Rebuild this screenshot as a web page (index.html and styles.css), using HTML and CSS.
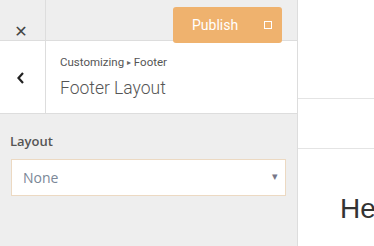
FILE: index.html
```html
<!DOCTYPE HTML>
<html>
<head>
<meta charset="utf-8">
<title>Customizer</title>
<link rel="stylesheet" href="styles.css">
</head>
<body>
	<div class="wrap">
		<div class="sidebar">
			<div class="topbar">
				<div class="close">&#10005;</div>
				<div class="publish">Publish <span class="gear"></span></div>
			</div>
			<div class="head">
				<div class="back">
					<svg width="10" height="14" viewBox="0 0 10 14"><path d="M7 2 L2.5 7 L7 12" fill="none" stroke="#222" stroke-width="2.2"/></svg>
				</div>
				<div class="titles">
					<div class="crumb">Customizing <span class="sep">&#9656;</span> Footer</div>
					<div class="title">Footer Layout</div>
				</div>
			</div>
			<div class="panel">
				<div class="label">Layout</div>
				<div class="select">
					<span>None</span>
					<span class="arrow">&#9662;</span>
				</div>
			</div>
		</div>
		<div class="preview">
			<div class="row1"></div>
			<div class="row2"></div>
			<div class="content">
				<h1>Hello world!</h1>
			</div>
		</div>
	</div>
</body>
</html>
```

FILE: styles.css
```css
*{
	margin: 0;
	padding: 0;
	box-sizing: border-box;
}
body{
	width: 374px;
	height: 246px;
	overflow: hidden;
	background: #fff;
	font-family: Roboto, "Liberation Sans", sans-serif;
}
.wrap{
	display: flex;
	height: 246px;
}
.sidebar{
	width: 298px;
	flex-shrink: 0;
	background: #eee;
	border-right: 1px solid #ddd;
	display: flex;
	flex-direction: column;
}
.topbar{
	height: 41px;
	border-bottom: 1px solid #ddd;
	display: flex;
}
.close{
	width: 46px;
	border-right: 1px solid #ddd;
	display: flex;
	align-items: flex-end;
	justify-content: center;
	padding: 0 3px 0 0;
	font-size: 16px;
	font-weight: bold;
	line-height: 1;
	color: #444;
	font-family: "DejaVu Sans", sans-serif;
}
.publish{
	position: relative;
	z-index: 1;
	margin: 7px 0 0 127px;
	width: 109px;
	height: 36px;
	background: #efb26e;
	border-radius: 3px;
	color: #fff;
	font-size: 14px;
	display: flex;
	align-items: center;
	justify-content: space-between;
	padding: 0 10px 0 19px;
}
.gear{
	width: 8px;
	height: 8px;
	border: 1px solid #fff;
}
.head{
	height: 73px;
	background: #fff;
	border-bottom: 1px solid #ddd;
	display: flex;
}
.back{
	width: 46px;
	border-right: 1px solid #ddd;
	display: flex;
	align-items: center;
	justify-content: center;
	padding-top: 2px;
	padding-right: 4px;
}
.titles{
	padding: 14px 0 0 14px;
}
.crumb{
	font-size: 11.5px;
	color: #555;
}
.sep{
	font-size: 8px;
	color: #666;
	vertical-align: 1px;
}
.title{
	font-size: 17.5px;
	font-weight: 300;
	color: #555;
	margin-top: 9px;
}
.panel{
	padding: 18px 11px 0 11px;
	font-family: "Open Sans", sans-serif;
}
.label{
	font-size: 13px;
	font-weight: 600;
	color: #555;
	line-height: 18px;
	margin-left: -1px;
}
.select{
	margin-top: 9px;
	height: 37px;
	width: 275px;
	background: #fff;
	border: 1px solid #ecd9c2;
	display: flex;
	align-items: center;
	justify-content: space-between;
	padding: 0 7px 0 11px;
	font-size: 14px;
	color: #7b8797;
}
.arrow{
	font-size: 11px;
	color: #778;
	margin-top: -4px;
}
.preview{
	flex: 1;
	overflow: hidden;
}
.row1{
	height: 99px;
	border-bottom: 1px solid #e4e4e4;
}
.row2{
	height: 50px;
	border-bottom: 1px solid #e4e4e4;
}
.content{
	padding: 44px 0 0 42px;
	white-space: nowrap;
}
h1{
	font-family: "Liberation Sans", Arial, sans-serif;
	font-weight: normal;
	font-size: 28px;
	color: #333;
}
```
